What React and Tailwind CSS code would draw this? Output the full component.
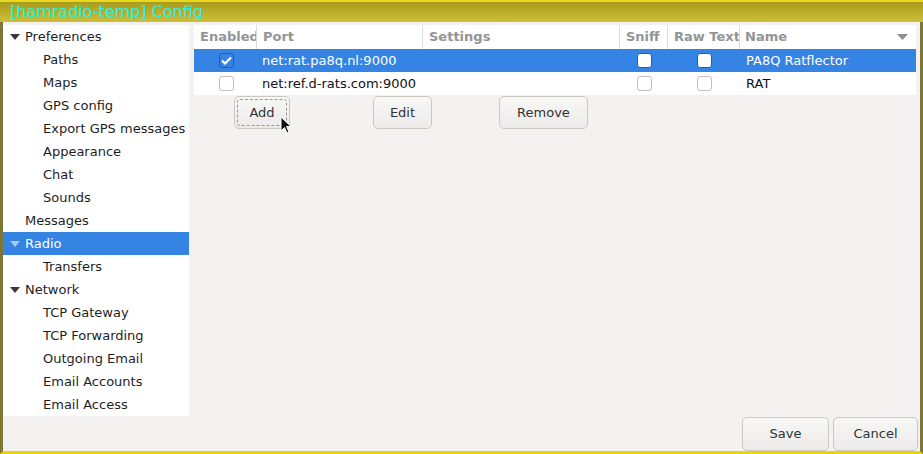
import { useState } from 'react';

const tree = [
    { label: 'Preferences', level: 0, expander: true },
    { label: 'Paths', level: 1 },
    { label: 'Maps', level: 1 },
    { label: 'GPS config', level: 1 },
    { label: 'Export GPS messages', level: 1 },
    { label: 'Appearance', level: 1 },
    { label: 'Chat', level: 1 },
    { label: 'Sounds', level: 1 },
    { label: 'Messages', level: 0 },
    { label: 'Radio', level: 0, expander: true, selected: true },
    { label: 'Transfers', level: 1 },
    { label: 'Network', level: 0, expander: true },
    { label: 'TCP Gateway', level: 1 },
    { label: 'TCP Forwarding', level: 1 },
    { label: 'Outgoing Email', level: 1 },
    { label: 'Email Accounts', level: 1 },
    { label: 'Email Access', level: 1 },
];

const ports = [
    { enabled: true, port: 'net:rat.pa8q.nl:9000', settings: '', sniff: false, raw: false, name: 'PA8Q Ratflector', selected: true },
    { enabled: false, port: 'net:ref.d-rats.com:9000', settings: '', sniff: false, raw: false, name: 'RAT' },
];

function Triangle({ light }) {
    return (
        <svg width="10" height="6" viewBox="0 0 10 6" className="shrink-0">
            <path d="M0 0h10L5 6z" fill={light ? '#a9c9f2' : '#3a3a3a'} />
        </svg>
    );
}

function Check({ checked, onDark }) {
    if (checked) {
        return (
            <span className="flex h-[15px] w-[15px] items-center justify-center rounded-[3px] border border-[#1c5fb4] bg-[#3584e4]">
                <svg width="11" height="9" viewBox="0 0 11 9">
                    <path d="M1 4.5l3 3L10 1.5" fill="none" stroke="white" strokeWidth="2.2" />
                </svg>
            </span>
        );
    }
    return (
        <span
            className={
                'block h-[15px] w-[15px] rounded-[3px] border bg-white ' +
                (onDark ? 'border-[#1c5fb4]' : 'border-[#c5c1bb]')
            }
        />
    );
}

function Button({ children, className, focused }) {
    return (
        <button
            type="button"
            className={
                'relative flex items-center justify-center rounded-[5px] border border-[#cdc7c2] bg-gradient-to-b from-[#f7f7f6] to-[#edebe9] text-[13px] text-[#2e3436] ' +
                className
            }
        >
            {focused && (
                <span className="pointer-events-none absolute inset-[2px] rounded-[3px] border border-dashed border-[#9a9a9a]" />
            )}
            {children}
        </button>
    );
}

export default function App() {
    const [selected, setSelected] = useState('Radio');

    return (
        <div
            className="flex h-[454px] w-[923px] flex-col overflow-hidden bg-[#f3f2f1]"
            style={{ fontFamily: '"DejaVu Sans", "Noto Sans", sans-serif' }}
        >
            <div className="h-[22px] shrink-0 border-t-2 border-[#e8d820] bg-gradient-to-b from-[#a99c1c] to-[#cdbf3a] pl-[10px] text-[16px] leading-[19px] text-[#22f0e6]">
                [hamradio-temp] Config
            </div>
            <div className="flex min-h-0 flex-1 border-l-[3px] border-r-[3px] border-b-[3px] border-l-[#7e7636] border-r-[#7e7636] border-b-[#ecd400]">
                <div className="flex w-[186px] shrink-0 flex-col pt-[3px]">
                    <div className="bg-white">
                        {tree.map((item) => {
                            const isSel = selected === item.label;
                            return (
                                <div
                                    key={item.label}
                                    onClick={() => setSelected(item.label)}
                                    className={
                                        'flex h-[23px] items-center text-[13px] ' +
                                        (isSel ? 'bg-[#3584e4] text-white' : 'text-[#1e1e1e]')
                                    }
                                >
                                    <span className="flex w-[22px] justify-center pl-[2px]">
                                        {item.expander && <Triangle light={isSel} />}
                                    </span>
                                    <span className={item.level === 1 ? 'pl-[18px]' : ''}>{item.label}</span>
                                </div>
                            );
                        })}
                    </div>
                </div>

                <div className="flex min-w-0 flex-1 flex-col pl-[5px] pr-[2px] pt-[3px]">
                    <div className="mr-[2px] bg-white text-[13px]">
                        <div className="flex h-[24px] items-center font-bold text-[#929595]">
                            <div className="w-[63px] overflow-hidden whitespace-nowrap border-r border-[#dcdcdc] pl-[6px] leading-[24px]">Enabled</div>
                            <div className="w-[166px] border-r border-[#dcdcdc] pl-[6px] leading-[24px]">Port</div>
                            <div className="w-[197px] border-r border-[#dcdcdc] pl-[6px] leading-[24px]">Settings</div>
                            <div className="w-[48px] border-r border-[#dcdcdc] pl-[6px] leading-[24px]">Sniff</div>
                            <div className="w-[72px] overflow-hidden whitespace-nowrap border-r border-[#dcdcdc] pl-[6px] leading-[24px]">Raw Text</div>
                            <div className="flex flex-1 items-center justify-between pl-[5px] pr-[8px] leading-[24px]">
                                <span>Name</span>
                                <svg width="11" height="6" viewBox="0 0 11 6">
                                    <path d="M0 0h11L5.5 6z" fill="#8e8e8e" />
                                </svg>
                            </div>
                        </div>
                        {ports.map((p) => (
                            <div
                                key={p.port}
                                className={
                                    'flex h-[23px] items-center ' +
                                    (p.selected ? 'bg-[#3584e4] text-white' : 'text-[#111]')
                                }
                            >
                                <div className="flex w-[64px] justify-center">
                                    <Check checked={p.enabled} onDark={p.selected} />
                                </div>
                                <div className="w-[167px] pl-[4px]">{p.port}</div>
                                <div className="w-[198px]">{p.settings}</div>
                                <div className="flex w-[49px] justify-center pr-[6px]">
                                    <Check checked={p.sniff} onDark={p.selected} />
                                </div>
                                <div className="flex w-[73px] justify-center pr-[9px]">
                                    <Check checked={p.raw} onDark={p.selected} />
                                </div>
                                <div className="flex-1 pl-[1px]">{p.name}</div>
                            </div>
                        ))}
                    </div>
                    <div className="relative flex h-[33px] items-start pt-[1px]">
                        <Button focused className="ml-[40px] h-[33px] w-[56px]">Add</Button>
                        <Button className="ml-[83px] h-[33px] w-[59px]">Edit</Button>
                        <Button className="ml-[67px] h-[33px] w-[89px]">Remove</Button>
                        <svg
                            className="absolute left-[86px] top-[21px]"
                            width="12"
                            height="19"
                            viewBox="0 0 12 19"
                        >
                            <path d="M1 1v14l3.5-3.5 2.5 5.5 2-1-2.5-5.5H11z" fill="#111" stroke="#fff" strokeWidth="1" />
                        </svg>
                    </div>
                    <div className="flex-1" />
                    <div className="flex justify-end gap-[4px] pb-[0px]">
                        <Button className="h-[34px] w-[87px]">Save</Button>
                        <Button className="h-[34px] w-[85px]">Cancel</Button>
                    </div>
                </div>
            </div>
        </div>
    );
}
